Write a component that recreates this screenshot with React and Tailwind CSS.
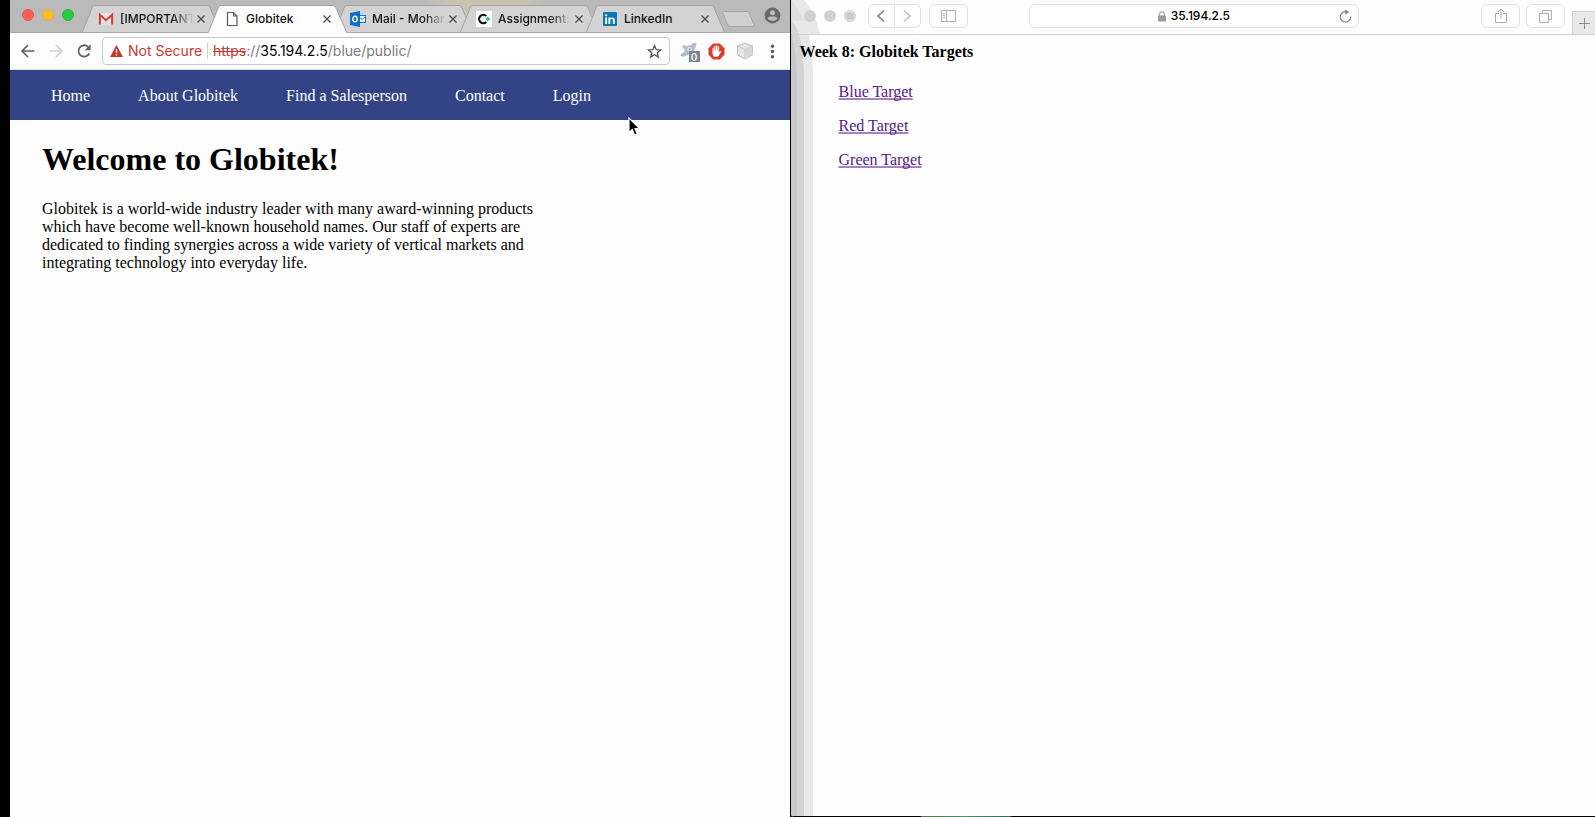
import React from "react";

const navItems = ["Home", "About Globitek", "Find a Salesperson", "Contact", "Login"];
const targets = ["Blue Target", "Red Target", "Green Target"];

function GmailIcon() {
  return (
    <svg width="16" height="14" viewBox="0 0 16 14">
      <rect x="1" y="1.5" width="14" height="11.5" fill="#ececec" />
      <path d="M2 13 8 7.5 14 13z" fill="#dcdcdc" />
      <path d="M1.9 12.500V2.800L8 8.200l6.100-5.400v9.700" fill="none" stroke="#d93a32" strokeWidth="2" />
    </svg>
  );
}

function PageIcon() {
  return (
    <svg width="16" height="16" viewBox="0 0 16 16">
      <path d="M3.500 1.500h6l3.500 3.500v9.500H3.500zM9.500 1.500V5H13" fill="#fff" stroke="#5a5a5a" strokeWidth="1.200" />
    </svg>
  );
}

function OutlookIcon() {
  return (
    <svg width="16" height="16" viewBox="0 0 16 16">
      <rect x="8" y="4.500" width="7.500" height="7" fill="#fff" stroke="#1b73c9" />
      <path d="m8.500 5.500 3.500 3 3.500-3" fill="none" stroke="#1b73c9" />
      <path d="M0 2 10 0v16L0 14z" fill="#0a6fc9" />
      <ellipse cx="5" cy="8" rx="2.200" ry="2.700" fill="none" stroke="#fff" strokeWidth="1.400" />
    </svg>
  );
}

function AssignmentIcon() {
  return (
    <svg width="16" height="16" viewBox="0 0 16 16">
      <rect width="16" height="16" fill="#fff" />
      <path d="M10.300 5A4.200 4.200 0 1 0 10.300 11" fill="none" stroke="#111" strokeWidth="2.200" />
      <path d="M11.800 6v4M9.800 8h4" stroke="#3fb98a" strokeWidth="2" />
    </svg>
  );
}

function LinkedInIcon() {
  return (
    <svg width="14" height="14" viewBox="0 0 14 14">
      <rect width="14" height="14" rx="1" fill="#0b76b8" />
      <path d="M2.200 5.500h1.900V12H2.200zM5.400 5.500h1.800v.9c.9-1.500 4.600-1.600 4.600 1.700V12H9.900V8.500c0-1.900-2.600-1.800-2.600 0V12H5.400z" fill="#fff" />
      <circle cx="3.100" cy="3.300" r="1.100" fill="#fff" />
    </svg>
  );
}

const tabs = [
  { title: "[IMPORTANT", icon: <GmailIcon />, fade: true },
  { title: "Globitek", icon: <PageIcon />, active: true },
  { title: "Mail - Mohan", icon: <OutlookIcon />, fade: true },
  { title: "Assignment:", icon: <AssignmentIcon />, fade: true },
  { title: "LinkedIn", icon: <LinkedInIcon /> },
];

function Tab({ tab }) {
  const fill = tab.active ? "#fdfdfd" : "#d3d3d3";
  return (
    <div
      className={
        "relative -mr-[13px] flex h-7 w-[139px] shrink-0 items-center pl-4 pr-[13px] " +
        (tab.active ? "z-10" : "z-0")
      }
    >
      <svg className="absolute inset-0 h-full w-full" viewBox="0 0 139 28" preserveAspectRatio="none">
        <path d="M0 28 10.500 2Q11.500 .5 13 .5H125Q126.500 .5 127.500 2L139 28z" fill={fill} />
        <path d="M0 28 10.500 2Q11.500 .5 13 .5H125Q126.500 .5 127.500 2L139 28" fill="none" stroke="#a3a3a3" />
        {!tab.active && <path d="M0 27.500H139" stroke="#a9a9a9" />}
      </svg>
      <span className="relative flex w-4 shrink-0 justify-center">{tab.icon}</span>
      <button
        className={
          "relative min-w-0 flex-1 pl-1.5 text-left text-xs font-medium whitespace-nowrap text-[#111] " +
          (tab.fade ? "[mask-image:linear-gradient(to_right,black_72%,transparent)]" : "")
        }
      >
        {tab.title}
      </button>
      <button aria-label={"Close " + tab.title} className="relative shrink-0 p-0.5">
        <svg width="10" height="10" viewBox="0 0 10 10">
          <path d="m1.500 1.500 7 7m0-7-7 7" stroke="#4c4c4c" strokeWidth="1.300" />
        </svg>
      </button>
    </div>
  );
}

function TabStrip() {
  return (
    <div className="flex h-[33px] items-end border-b border-[#a9a9a9] bg-[#bababa] bg-[linear-gradient(to_right,transparent_53%,#c6c3b2_56%,#c6c3b2_66%,transparent_69%)]">
      <div className="flex h-full items-center gap-2 pr-2 pl-3 pb-[3px]">
        <button aria-label="Close window" className="size-3 rounded-full border border-[#ee544c] bg-[#ff5f57]" />
        <button aria-label="Minimize window" className="size-3 rounded-full border border-[#e8ad2b] bg-[#ffbd2e]" />
        <button aria-label="Zoom window" className="size-3 rounded-full border border-[#24b83a] bg-[#28ca41]" />
      </div>
      <div className="-mb-px flex shrink-0">
        {tabs.map((t) => (
          <Tab key={t.title} tab={t} />
        ))}
      </div>
      <button aria-label="New tab" className="mb-1 shrink-0 pl-2.5">
        <svg width="33" height="17" viewBox="0 0 33 17">
          <path d="M1.500 .5H25q1.500 0 2 1.200L32 14q.5 1.500-1 1.500H8q-1.500 0-2-1.200L.7 2Q.3.500 1.500.5z" fill="#d0d0d0" stroke="#a6a6a6" />
        </svg>
      </button>
      <button aria-label="Profile" className="mr-[9px] mb-2 ml-auto">
        <svg width="17" height="17" viewBox="0 0 17 17">
          <circle cx="8.500" cy="8.500" r="7.900" fill="#686868" />
          <circle cx="8.500" cy="5.800" r="2.500" fill="#bababa" />
          <path d="M3.400 11.300c1.500-2.700 8.700-2.700 10.200 0-2 3.500-8.200 3.500-10.200 0z" fill="#bababa" />
        </svg>
      </button>
    </div>
  );
}

function Toolbar() {
  return (
    <div className="flex h-[37px] items-center border-b border-[#e0e0e0] bg-[#fdfdfd] pr-2.5 pl-2.5">
      <div className="flex shrink-0 gap-3 pr-2.5">
        <button aria-label="Back">
          <svg width="16" height="16" viewBox="0 0 16 16">
            <path d="M14.500 8H2.500M8 2 2 8l6 6" fill="none" stroke="#636363" strokeWidth="1.700" />
          </svg>
        </button>
        <button aria-label="Forward">
          <svg width="16" height="16" viewBox="0 0 16 16">
            <path d="M1.500 8h12M8 2l6 6-6 6" fill="none" stroke="#d2d2d2" strokeWidth="1.700" />
          </svg>
        </button>
        <button aria-label="Reload">
          <svg width="16" height="16" viewBox="0 0 16 16">
            <path d="M13.300 10.500A5.700 5.700 0 1 1 12.300 4" fill="none" stroke="#636363" strokeWidth="1.800" />
            <path d="M14.600 1.300v5.900H8.700z" fill="#636363" />
          </svg>
        </button>
      </div>
      <div className="flex h-7 min-w-0 flex-1 items-center rounded border border-[#c8c8c8] bg-white px-[7px] text-sm whitespace-nowrap">
        <svg width="13" height="12" viewBox="0 0 13 12" className="shrink-0">
          <path d="M6.500 0 13 12H0z" fill="#c5392b" />
          <path d="M6.500 4v4M6.500 9v1.500" stroke="#fff" strokeWidth="1.300" />
        </svg>
        <span className="ml-[5px] text-[#c5392b]">Not Secure</span>
        <span className="mx-[5px] h-4 w-px bg-[#d0d0d0]" />
        <div className="min-w-0 flex-1 overflow-hidden text-[#7b7b7b]" role="textbox" aria-label="Address" tabIndex={0}>
          <span className="text-[#c5392b] line-through">https</span>://<span className="text-black">35.194.2.5</span>/blue/public/
        </div>
        <button aria-label="Bookmark this page">
          <svg width="15" height="15" viewBox="0 0 15 15">
            <path d="m7.500 1.600 1.700 4 4.300.3-3.300 2.800 1.100 4.300-3.800-2.300L3.700 13l1.100-4.300L1.500 5.900l4.300-.3z" fill="none" stroke="#585858" strokeWidth="1.300" />
          </svg>
        </button>
      </div>
      <div className="flex shrink-0 items-center gap-[9px] pl-2.5">
        <button aria-label="Extension, 0 items" className="relative">
          <svg width="19" height="18" viewBox="0 0 19 18">
            <path d="M3.500 2.500 6 4.500q3-2 5.500-1.500L13 .8l3.500.5L15.500 5l-1 2q.5 3-.5 4l-5 1.500-5 2-3.500-.5.5-2.500 3.500-1.500L4.500 7 2.500 5.500z" fill="#b3bad1" />
            <circle cx="9.500" cy="7.300" r="2.300" fill="#e4e7f0" />
            <circle cx="9.800" cy="7.300" r="1.100" fill="#99a3c1" />
          </svg>
          <span className="absolute top-[9px] left-[9px] flex h-[11px] w-[11px] items-center justify-center bg-[#7f8190] text-[10px] leading-none font-semibold text-white">0</span>
        </button>
        <button aria-label="Ad blocker">
          <svg width="17" height="17" viewBox="0 0 17 17">
            <path d="M5.200.5h6.600l4.700 4.700v6.600l-4.700 4.700H5.200L.5 11.800V5.200z" fill="#e2382d" />
            <path d="M4.500 8.500V5q.6-.9 1.200 0v2.500h.5V3.300q.7-.9 1.300 0v4H8V2.700q.7-.9 1.300 0v4.600h.5V3.500q.7-.9 1.300 0v6l1.200-1.400q1-.5 1 .4l-2.500 4.300q-.6 1-2 1h-2q-2 0-2.100-2.200z" fill="#fff" />
          </svg>
        </button>
        <button aria-label="Package extension" className="ml-0.5">
          <svg width="18" height="18" viewBox="0 0 18 18">
            <path d="m9 1 7.500 3v9L9 17l-7.500-4V4z" fill="#e7e7e7" stroke="#bcbcbc" />
            <path d="m1.500 4 7.500 3.500L16.500 4M9 7.500V17" fill="none" stroke="#c4c4c4" />
            <path d="m9 7.500 7.500-3.500v9L9 17z" fill="#d6d6d6" />
          </svg>
        </button>
        <button aria-label="Menu" className="ml-0.5">
          <svg width="15" height="15" viewBox="0 0 15 15" fill="#5a5a5a">
            <circle cx="7.500" cy="2.300" r="1.700" />
            <circle cx="7.500" cy="7.500" r="1.700" />
            <circle cx="7.500" cy="12.700" r="1.700" />
          </svg>
        </button>
      </div>
    </div>
  );
}

function Cursor() {
  return (
    <svg className="absolute top-[117px] left-[618px] z-20" width="14" height="20" viewBox="0 0 14 20">
      <path d="M1 1v14.500l3.300-3.100 2.300 5.700 2.700-1.100-2.400-5.500h4.600z" fill="#000" stroke="#fff" strokeWidth="1.100" />
    </svg>
  );
}

function ChromeWindow() {
  return (
    <section className="relative flex min-w-0 flex-[780] flex-col bg-[#fefefe]">
      <TabStrip />
      <Toolbar />
      <div className="font-['Liberation_Serif',serif] text-base text-black">
        <nav className="flex h-[50px] items-center gap-12 bg-[#334486] pt-0.5 pl-[41px] text-white">
          {navItems.map((n) => (
            <a key={n} href="#" className="whitespace-nowrap">{n}</a>
          ))}
        </nav>
        <main className="px-8 pt-[21px]">
          <h1 className="text-[32px] leading-9 font-bold">Welcome to Globitek!</h1>
          <p className="mt-[23px] max-w-[500px] leading-[18px]">
            Globitek is a world-wide industry leader with many award-winning products which have become well-known
            household names. Our staff of experts are dedicated to finding synergies across a wide variety of vertical
            markets and integrating technology into everyday life.
          </p>
        </main>
      </div>
      <Cursor />
    </section>
  );
}

const safariButton = "flex h-6 items-center justify-center border border-[#e2e2e2] bg-white";

function SafariBar() {
  return (
    <header className="relative flex h-[35px] items-end border-b border-[#d0d0d0]">
      <div className="flex h-full flex-1 items-center pb-[3px] pl-[13px]">
        <div className="flex gap-2">
          <button aria-label="Close window" className="size-3 rounded-full bg-[#d0d0d0]" />
          <button aria-label="Minimize window" className="size-3 rounded-full bg-[#d0d0d0]" />
          <button aria-label="Zoom window" className="size-3 rounded-full border border-[#d0d0d0] bg-[#cacaca] shadow-[inset_0_0_0_1px_#ececec]" />
        </div>
        <div className="ml-3 flex">
          <button aria-label="Back" className={safariButton + " w-[27px] rounded-l-md"}>
            <svg width="10" height="14" viewBox="0 0 10 14">
              <path d="M8 1.500 2 7l6 5.500" fill="none" stroke="#7c7c7c" strokeWidth="1.500" />
            </svg>
          </button>
          <button aria-label="Forward" className={safariButton + " w-[26px] rounded-r-md border-l-0"}>
            <svg width="10" height="14" viewBox="0 0 10 14">
              <path d="M2 1.500 8 7l-6 5.500" fill="none" stroke="#bdbdbd" strokeWidth="1.500" />
            </svg>
          </button>
        </div>
        <button aria-label="Show sidebar" className={safariButton + " ml-2 w-[39px] rounded-md"}>
          <svg width="15" height="12" viewBox="0 0 15 12" fill="none" stroke="#b0b0b0">
            <path d="M.5.500h14v11H.5zM5.500.5v11M2 3.500h2M2 5.500h2M2 7.500h2" />
          </svg>
        </button>
      </div>
      <div className="mr-2.5 mb-1.5 flex h-6 w-[330px] items-center rounded-md border border-[#e2e2e2] bg-white px-1.5 text-xs font-medium text-black">
        <div className="flex flex-1 items-center justify-center gap-[5px] pl-3">
          <svg width="8" height="11" viewBox="0 0 8 11">
            <rect y="4.500" width="8" height="6" rx=".6" fill="#9b9b9b" />
            <path d="M1.700 5V3q0-2.200 2.300-2.200T6.300 3v2" fill="none" stroke="#9b9b9b" strokeWidth="1.100" />
          </svg>
          <span>35.194.2.5</span>
        </div>
        <button aria-label="Reload">
          <svg width="13" height="14" viewBox="0 0 13 14">
            <path d="M11.700 7.500A5.200 5.200 0 1 1 7 2.700" fill="none" stroke="#858585" strokeWidth="1.200" />
            <path d="M6 .2 10.200 2.900 6.500 5.800z" fill="#858585" />
          </svg>
        </button>
      </div>
      <div className="flex h-full flex-1 items-end justify-end">
        <button aria-label="Share" className={safariButton + " mb-1.5 w-[39px] rounded-md"}>
          <svg width="12" height="16" viewBox="0 0 12 16" fill="none" stroke="#a9a9a9">
            <path d="M4 5.500H.5v9h11v-9H8M6 10.500V1M3 4l3-3 3 3" />
          </svg>
        </button>
        <button aria-label="Show all tabs" className={safariButton + " mb-1.5 ml-1.5 w-[39px] rounded-md"}>
          <svg width="13" height="13" viewBox="0 0 13 13" fill="none" stroke="#adadad">
            <path d="M.5 3.500h9v9h-9zM3.500 3.500v-3h9v9h-3" />
          </svg>
        </button>
        <button aria-label="New tab" className="ml-[7px] flex h-[23px] w-[23px] items-center justify-center border-t border-l border-[#cfcfcf] bg-[#e8e8e8]">
          <svg width="11" height="11" viewBox="0 0 11 11">
            <path d="M5.500 0v11M0 5.500h11" stroke="#8b8b8b" />
          </svg>
        </button>
      </div>
    </header>
  );
}

function EdgeShade() {
  return (
    <div className="absolute inset-y-0 left-0 flex w-[40px] flex-col" aria-hidden="true">
      <svg className="shrink-0" width="40" height="110" viewBox="0 0 40 110">
        <path d="M0 0H13Q24 12 29 34H18Q22 60 22 75V110H0z" fill="#e8e8e8" />
        <path d="M0 20Q6 26 9 38Q13 56 13 80V110H0z" fill="#d4d4d4" />
        <path d="M0 0Q6 6 12 20Q8 22 0 20z" fill="#dedede" />
        <path d="M0 33Q6 50 6 90V110H0z" fill="#c9c9c9" />
      </svg>
      <div className="flex flex-1">
        <div className="w-1.5 bg-[#c9c9c9]" />
        <div className="w-[7px] bg-[#d4d4d4]" />
        <div className="w-[9px] bg-[#e8e8e8]" />
      </div>
    </div>
  );
}

function SafariWindow() {
  return (
    <section className="relative flex min-w-0 flex-[805] flex-col overflow-hidden rounded-bl border-l border-black bg-[#fefefe]">
      <EdgeShade />
      <SafariBar />
      <main className="relative flex-1 px-[9px] pt-2 font-['Liberation_Serif',serif] text-base leading-[18px] text-black">
        <h1 className="font-bold">Week 8: Globitek Targets</h1>
        <ul className="mt-[22px] flex flex-col gap-4 pl-[39px]">
          {targets.map((t) => (
            <li key={t}>
              <a href="#" className="text-[#551a8b] underline decoration-[#a583c2] decoration-2 underline-offset-1 [text-decoration-skip-ink:none]">
                {t}
              </a>
            </li>
          ))}
        </ul>
      </main>
      <div className="relative h-px bg-black">
        <div className="ml-[130px] h-px w-[90px] bg-linear-to-r from-[#4c7a4e] via-[#4a9468] to-[#2c6a4c]" />
      </div>
    </section>
  );
}

export default function App() {
  return (
    <div className="flex min-h-screen bg-black font-['Inter',sans-serif]">
      <div className="w-2.5 shrink-0 bg-black" />
      <ChromeWindow />
      <SafariWindow />
    </div>
  );
}
